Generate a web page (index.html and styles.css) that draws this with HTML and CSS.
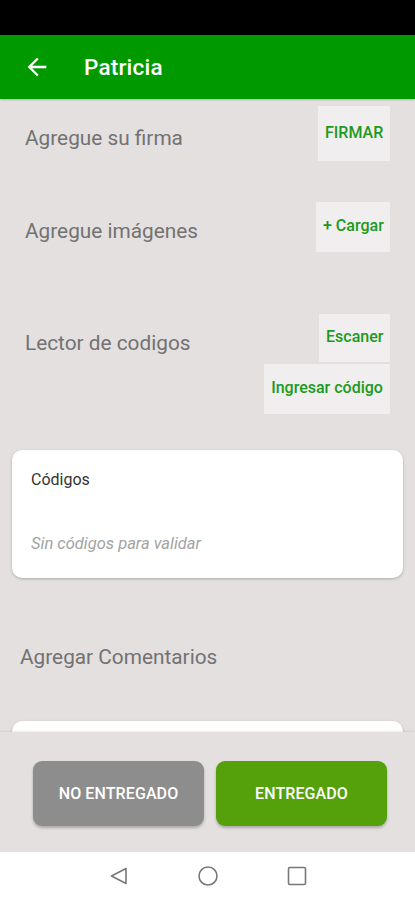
FILE: index.html
```html
<!DOCTYPE html>
<html lang="es">
<head>
<meta charset="utf-8">
<title>Patricia</title>
<link rel="stylesheet" href="styles.css">
</head>
<body>
<div class="screen">
  <div class="status"></div>
  <header class="appbar">
    <svg class="back" viewBox="0 0 24 24" width="28" height="28"><path d="M20 11H7.83l5.59-5.59L12 4l-8 8 8 8 1.41-1.41L7.83 13H20v-2z" fill="#fff"/></svg>
    <h1 class="title">Patricia</h1>
  </header>
  <main class="content">
    <div class="row row-firma">
      <span class="label">Agregue su firma</span>
      <button class="tbtn tbtn-firma">FIRMAR</button>
    </div>
    <div class="row row-img">
      <span class="label">Agregue imágenes</span>
      <button class="tbtn tbtn-cargar">+ Cargar</button>
    </div>
    <div class="row row-lector">
      <span class="label label-lector">Lector de codigos</span>
      <div class="btn-stack">
        <button class="tbtn tbtn-escaner">Escaner</button>
        <button class="tbtn tbtn-ingresar">Ingresar código</button>
      </div>
    </div>
    <section class="card codes">
      <div class="card-title">Códigos</div>
      <div class="card-empty">Sin códigos para validar</div>
    </section>
    <div class="comments-label">Agregar Comentarios</div>
    <section class="card comments"></section>
  </main>
  <footer class="actions">
    <button class="abtn abtn-no">NO ENTREGADO</button>
    <button class="abtn abtn-yes">ENTREGADO</button>
  </footer>
  <nav class="navbar">
    <svg viewBox="0 0 20 20" width="20" height="20"><path d="M17 2.5 L2.5 10 L17 17.5 Z" fill="none" stroke="#777" stroke-width="1.6" stroke-linejoin="round"/></svg>
    <svg viewBox="0 0 22 22" width="22" height="22"><circle cx="11" cy="11" r="9" fill="none" stroke="#777" stroke-width="1.6"/></svg>
    <svg viewBox="0 0 20 20" width="20" height="20"><rect x="1.5" y="1.5" width="17" height="17" rx="1.5" fill="none" stroke="#777" stroke-width="1.6"/></svg>
  </nav>
</div>
</body>
</html>
```
FILE: styles.css
```css
* { box-sizing: border-box; }
html, body { margin: 0; padding: 0; }
body {
  font-family: Roboto, "Noto Sans", Arial, sans-serif;
  background: #e4e0e0;
}
.screen {
  width: 415px;
  height: 900px;
  display: flex;
  flex-direction: column;
  overflow: hidden;
}
.status { height: 35px; background: #000; flex: none; }
.appbar {
  height: 64px;
  flex: none;
  background: #009a00;
  display: flex;
  align-items: center;
  padding-left: 23px;
  box-shadow: 0 1px 2px rgba(0,0,0,0.2);
  position: relative;
  z-index: 2;
}
.back { display: block; flex: none; }
.title {
  margin: 0 0 0 33px;
  color: #fff;
  font-size: 22.5px;
  font-weight: 500;
  letter-spacing: 0.2px;
}
.content {
  flex: 1;
  overflow: hidden;
  padding-top: 7px;
}
.row {
  display: flex;
  justify-content: space-between;
  padding: 0 25px;
}
.row-firma { align-items: center; height: 55px; }
.row-img { align-items: center; height: 50px; margin-top: 41px; }
.row-lector { align-items: flex-start; margin-top: 62px; }
.label {
  color: #727272;
  font-size: 20.8px;
  padding-top: 8px;
}
.label-lector { padding-top: 17px; }
.tbtn {
  border: none;
  background: #f0eeee;
  color: #1c9a1c;
  font-family: inherit;
  font-weight: 500;
  font-size: 16px;
  padding: 0 7px;
  margin: 0;
  border-radius: 0;
  white-space: nowrap;
}
.tbtn-firma { height: 55px; width: 72px; padding-bottom: 2px; }
.tbtn-cargar { height: 50px; width: 74px; padding-bottom: 3px; }
.btn-stack {
  display: flex;
  flex-direction: column;
  align-items: flex-end;
  gap: 2px;
}
.tbtn-escaner { height: 48px; width: 71px; padding-bottom: 4px; }
.tbtn-ingresar { height: 50px; width: 126px; padding-bottom: 4px; }
.card {
  background: #fff;
  border-radius: 10px;
  margin: 0 12px;
  box-shadow: 0 1px 3px rgba(0,0,0,0.25);
}
.codes {
  margin-top: 36px;
  height: 128px;
  padding: 20px 19px 0;
}
.card-title {
  color: #333;
  font-size: 16px;
}
.card-empty {
  margin-top: 45px;
  color: #a3a3a3;
  font-size: 16.5px;
  font-style: italic;
}
.comments-label {
  margin-top: 67px;
  padding-left: 20px;
  color: #727272;
  font-size: 20.8px;
}
.comments {
  margin-top: 52px;
  height: 80px;
}
.actions {
  height: 120px;
  flex: none;
  display: flex;
  align-items: flex-start;
  gap: 12px;
  padding: 29px 28px 0 33px;
  background: #e4e0e0;
  box-shadow: 0 -1px 2px rgba(0,0,0,0.08);
  position: relative;
  z-index: 1;
}
.abtn {
  flex: 1;
  height: 65px;
  border: none;
  border-radius: 9px;
  color: #fff;
  font-family: inherit;
  font-weight: 500;
  font-size: 16px;
  letter-spacing: 0.1px;
  box-shadow: 0 2px 3px rgba(0,0,0,0.25);
}
.abtn-no { background: #8e8d8e; }
.abtn-yes { background: #55a10c; }
.navbar {
  height: 48px;
  flex: none;
  background: #fff;
  display: flex;
  align-items: center;
  justify-content: center;
  gap: 0;
  padding-bottom: 1px;
}
.navbar svg { display: block; margin: 0 34px; }
```
